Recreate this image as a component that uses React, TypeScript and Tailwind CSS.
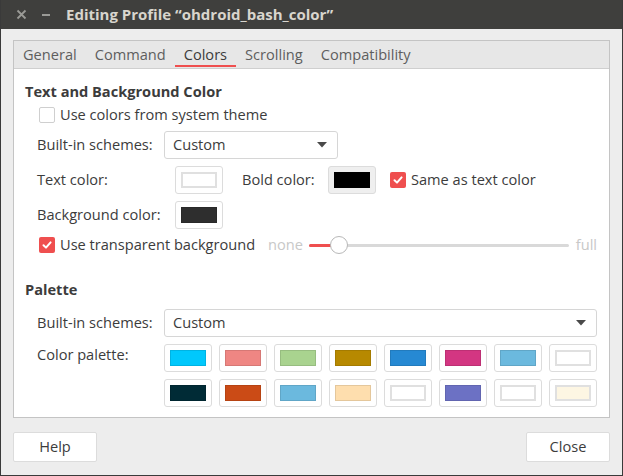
import React from "react";

const font = { fontFamily: '"Open Sans", "Noto Sans", sans-serif' };

const paletteTop = ["#00c8fc", "#ef8683", "#a9d38f", "#b78900", "#2689d3", "#d33682", "#6bb9de", "#ffffff"];
const paletteBottom = ["#002b36", "#cb4b16", "#6bb9de", "#fedeae", "#ffffff", "#6c71c4", "#ffffff", "#fdf6e3"];

function Checkbox({ checked }: { checked?: boolean }) {
  if (checked) {
    return (
      <div className="w-[16px] h-[16px] rounded-[2px] bg-[#ef4f4f] flex items-center justify-center shrink-0">
        <svg width="12" height="12" viewBox="0 0 12 12">
          <path d="M2.5 6.2 L5 8.6 L9.6 3.4" fill="none" stroke="white" strokeWidth="2" strokeLinecap="round" strokeLinejoin="round" />
        </svg>
      </div>
    );
  }
  return <div className="w-[16px] h-[16px] rounded-[2px] bg-white border border-[#cfcfcf] shrink-0" />;
}

function Combo({ className }: { className: string }) {
  return (
    <div className={`h-[28px] bg-white border border-[#d6d6d6] rounded-[3px] flex items-center justify-between pl-[8px] pr-[10px] ${className}`}>
      <span>Custom</span>
      <svg width="10" height="6" viewBox="0 0 10 6">
        <path d="M0 0 H10 L5 5.5 Z" fill="#4a4a4a" />
      </svg>
    </div>
  );
}

function Swatch({ color, bg }: { color: string; bg?: boolean }) {
  const light = color === "#ffffff" || color === "#fdf6e3";
  return (
    <div className={`w-[48px] h-[28px] rounded-[3px] border border-[#dcdcdc] flex items-center justify-center ${bg ? "bg-[#efefef]" : "bg-white"}`}>
      <div
        className={`w-[36px] h-[16px] border ${light ? "border-[#e0e0e0] border-2" : "border-black/10"}`}
        style={{ backgroundColor: color }}
      />
    </div>
  );
}

export default function App() {
  return (
    <div
      className="w-[623px] h-[476px] flex flex-col border-l border-r border-b border-[#3a3a3a] text-[14.6px] text-[#3c3c3c]"
      style={font}
    >
      <div className="h-[29px] shrink-0 bg-[#3f3f3d] flex items-center pl-[15px]">
        <svg width="11" height="11" viewBox="0 0 11 11">
          <path d="M1.5 1.5 L9.5 9.5 M9.5 1.5 L1.5 9.5" stroke="#9a9a96" strokeWidth="1.8" />
        </svg>
        <div className="ml-[15px] w-[8px] h-[2px] bg-[#9a9a96]" />
        <div className="ml-[16px] font-bold text-[15px] text-[#d8d5cd]">Editing Profile “ohdroid_bash_color”</div>
      </div>

      <div className="flex-1 bg-[#ededed] flex flex-col px-[12px] pt-[11px] pb-[13px]">
        <div className="h-[378px] flex flex-col border border-[#c4c4c4] bg-white">
          <div className="h-[28px] shrink-0 bg-[#e7e7e7] border-b border-[#cfcfcf] flex">
            {["General", "Command", "Colors", "Scrolling", "Compatibility"].map((t) => (
              <div key={t} className="relative px-[9px] flex items-center pt-[1px]">
                <span className={t === "Colors" ? "text-[#3c3c3c]" : "text-[#5e5e5e]"}>{t}</span>
                {t === "Colors" && <div className="absolute left-0 right-0 bottom-[1px] h-[2px] bg-[#ef4f4f]" />}
              </div>
            ))}
          </div>

          <div className="flex-1 flex flex-col pl-[11px] pr-[12px] pt-[13px]">
            <div className="h-[18px] leading-[18px] font-bold">Text and Background Color</div>

            <div className="mt-[5px] h-[20px] flex items-center pl-[14px] gap-[5px]">
              <Checkbox />
              <span>Use colors from system theme</span>
            </div>

            <div className="mt-[6px] flex items-center pl-[12px]">
              <div className="w-[127px]">Built-in schemes:</div>
              <Combo className="w-[174px]" />
            </div>

            <div className="mt-[7px] h-[28px] flex items-center pl-[12px]">
              <div className="w-[138px]">Text color:</div>
              <Swatch color="#ffffff" />
              <div className="ml-[19px] w-[86px]">Bold color:</div>
              <Swatch color="#000000" bg />
              <div className="ml-[14px] flex items-center gap-[5px]">
                <Checkbox checked />
                <span>Same as text color</span>
              </div>
            </div>

            <div className="mt-[7px] h-[28px] flex items-center pl-[12px]">
              <div className="w-[138px]">Background color:</div>
              <Swatch color="#2e2e2e" />
            </div>

            <div className="mt-[6px] h-[20px] flex items-center pl-[14px]">
              <Checkbox checked />
              <span className="ml-[5px]">Use transparent background</span>
              <span className="ml-[13px] text-[#c8c8c8]">none</span>
              <div className="ml-[6px] flex-1 relative h-[20px] flex items-center">
                <div className="w-full h-[3px] rounded bg-[#d9d9d9]" />
                <div className="absolute left-0 w-[26px] h-[3px] rounded bg-[#ef4f4f]" />
                <div className="absolute left-[21px] w-[18px] h-[18px] rounded-full bg-white border border-[#b8b8b8]" />
              </div>
              <span className="ml-[7px] text-[#c8c8c8]">full</span>
            </div>

            <div className="mt-[25px] h-[18px] leading-[18px] font-bold">Palette</div>

            <div className="mt-[11px] flex items-center pl-[12px]">
              <div className="w-[127px]">Built-in schemes:</div>
              <Combo className="flex-1" />
            </div>

            <div className="mt-[7px] flex pl-[12px]">
              <div className="w-[127px] pt-[0px]">Color palette:</div>
              <div className="grid grid-cols-8 gap-x-[7px] gap-y-[7px]">
                {[...paletteTop, ...paletteBottom].map((c, i) => (
                  <Swatch key={i} color={c} />
                ))}
              </div>
            </div>
          </div>
        </div>

        <div className="mt-[14px] flex justify-between">
          <div className="w-[84px] h-[30px] bg-white border border-[#dcdcdc] rounded-[2px] flex items-center justify-center">Help</div>
          <div className="w-[84px] h-[30px] bg-white border border-[#dcdcdc] rounded-[2px] flex items-center justify-center">Close</div>
        </div>
      </div>
    </div>
  );
}
